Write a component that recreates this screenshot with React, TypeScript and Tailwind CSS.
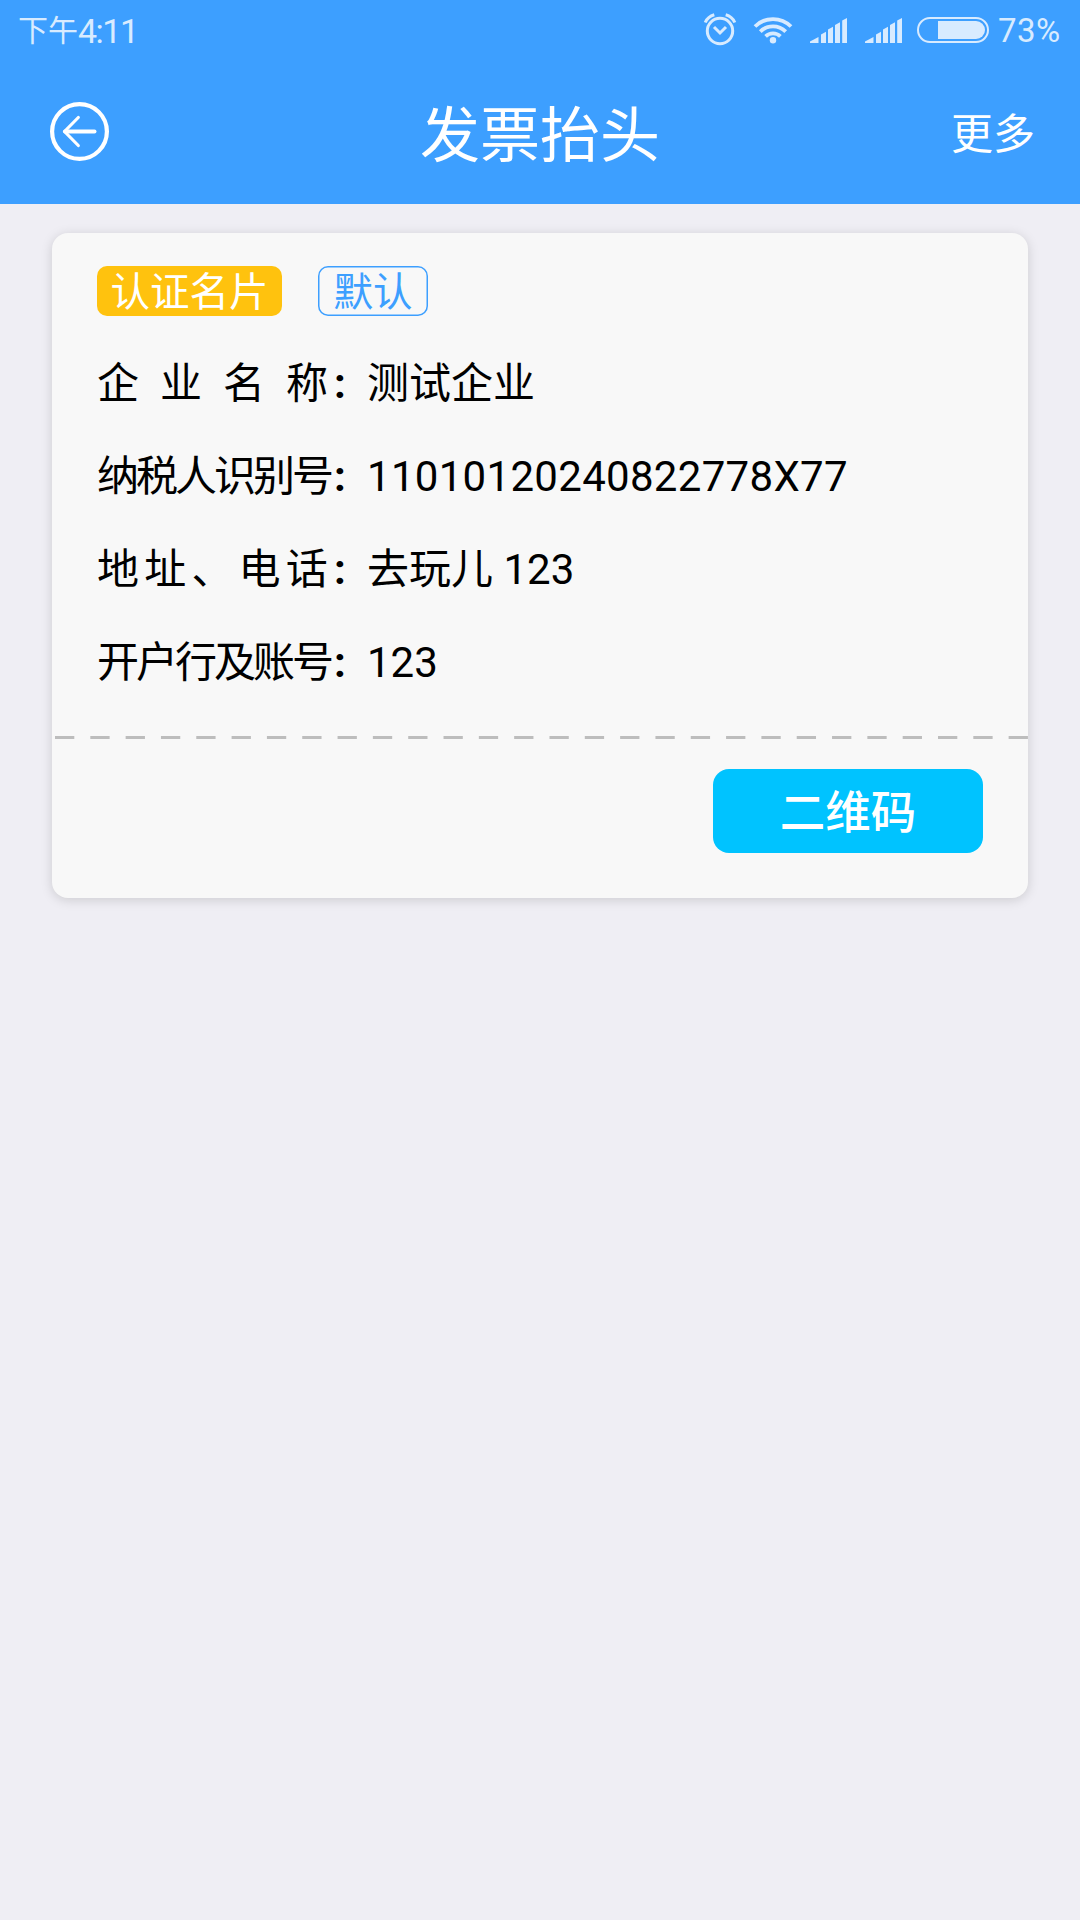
import { useState } from 'react'

type Field = {
  label: string
  tracking: string
  value: string
}

const fields: Field[] = [
  { label: '企业名称', tracking: 'tracking-[21px]', value: '测试企业' },
  { label: '纳税人识别号', tracking: 'tracking-[-3px]', value: '11010120240822778X77' },
  { label: '地址、电话', tracking: 'tracking-[5.2px]', value: '去玩儿 123' },
  { label: '开户行及账号', tracking: 'tracking-[-3px]', value: '123' },
]

function AlarmIcon() {
  return (
    <svg width="34" height="34" viewBox="0 0 34 34" fill="none" stroke="currentColor" strokeWidth="3">
      <circle cx="17" cy="18" r="12.7" />
      <path d="M11 14L17 20L23 14" />
      <path d="M2.2 9.5C4 5.5 7 3 11.3 1.8" />
      <path d="M31.8 9.5C30 5.5 27 3 22.7 1.8" />
    </svg>
  )
}

function WifiIcon() {
  return (
    <svg width="40" height="28" viewBox="0 0 40 28" fill="none" stroke="currentColor" strokeWidth="3.8">
      <path d="M2 10.5A25.5 25.5 0 0 1 38 10.5" />
      <path d="M7.3 15.6A18 18 0 0 1 32.7 15.6" />
      <path d="M12.6 20.4A10.6 10.6 0 0 1 27.4 20.4" />
      <circle cx="20" cy="24.2" r="3.2" fill="currentColor" stroke="none" />
    </svg>
  )
}

function SignalIcon() {
  return (
    <svg width="37" height="25" viewBox="0 0 37 25" fill="currentColor">
      <path d="M0 25V23.4L8.5 19V25Z" />
      <path d="M11 25V16.5L16 13.8V25Z" />
      <path d="M18 25V11.5L23 8.8V25Z" />
      <path d="M25 25V7L30 4.2V25Z" />
      <path d="M32.2 25V2.6L37 0V25Z" />
    </svg>
  )
}

function BatteryIcon() {
  return (
    <svg width="72" height="26" viewBox="0 0 72 26" fill="none">
      <rect x="1" y="1" width="70" height="24" rx="12" stroke="currentColor" strokeWidth="2" />
      <path d="M21 4H59A9 9 0 0 1 59 22H21Z" fill="currentColor" />
    </svg>
  )
}

function BackIcon() {
  return (
    <svg width="60" height="60" viewBox="0 0 60 60" fill="none" stroke="currentColor" strokeLinecap="round">
      <circle cx="29.5" cy="29.5" r="27.4" strokeWidth="4.2" />
      <path d="M15 29.5H44.5" strokeWidth="4" />
      <path d="M28.3 15.5L14.5 29.5L28.3 43.5" strokeWidth="3.2" strokeLinejoin="round" />
    </svg>
  )
}

function StatusBar() {
  return (
    <div className="flex h-[60px] items-center justify-between pr-[18px] pl-[18px] text-[#d8ebff]">
      <div className="flex items-center text-[30px] leading-[60px]">
        <span className="pt-[2px]">下午</span>
        <span className="pt-px text-[34px] tracking-[-1.5px]">4:11</span>
      </div>
      <div className="flex items-center">
        <AlarmIcon />
        <span className="ml-[16px]"><WifiIcon /></span>
        <span className="ml-[17px]"><SignalIcon /></span>
        <span className="ml-[18px]"><SignalIcon /></span>
        <span className="ml-[15px]"><BatteryIcon /></span>
        <span className="ml-[9px] w-[64px] pt-px text-[33px] leading-[60px] tracking-[0.4px]">73%</span>
      </div>
    </div>
  )
}

export default function App() {
  const [showCode, setShowCode] = useState(false)

  return (
    <div className="flex h-[1920px] w-[1080px] flex-col bg-[#efeef4] font-[Roboto,'Noto_Sans_CJK_SC',sans-serif]">
      <header className="h-[204px] bg-[#3d9fff] text-white">
        <StatusBar />
        <div className="grid h-[144px] grid-cols-3 items-center pr-[45px] pl-[50px]">
          <button type="button" aria-label="返回" className="justify-self-start">
            <BackIcon />
          </button>
          <h1 className="pt-[9px] pr-[5px] text-center text-[60px] leading-[135px] font-normal">发票抬头</h1>
          <button type="button" className="justify-self-end pt-[5px] text-[42px]">更多</button>
        </div>
      </header>

      <main className="px-[52px] pt-[29px]">
        <section className="h-[665px] overflow-hidden rounded-[16px] bg-[#f8f8f8] shadow-[0_2px_12px_rgba(0,0,0,0.15)]">
          <div className="flex gap-9 pt-[33px] pl-[45px] text-[39.5px]">
            <span className="h-[50px] w-[185px] rounded-[10px] bg-[#ffc20e] text-center leading-[54px] text-white">认证名片</span>
            <span className="h-[50px] w-[110px] rounded-[10px] text-center leading-[54px] text-[#3d9fff] shadow-[inset_0_0_0_1.5px_#3d9fff]">
              默认
            </span>
          </div>

          <dl className="pt-[21px] pl-[45px] text-[42px] leading-[93px] text-black">
            {fields.map((field) => (
              <div key={field.label} className="flex h-[93px] whitespace-nowrap">
                <dt className="flex w-[270px]">
                  <span className="w-[237px]">
                    <span className={field.tracking}>{field.label.slice(0, -1)}</span>
                    {field.label.slice(-1)}
                  </span>
                  <span className="font-bold">:</span>
                </dt>
                <dd className={field.value.length > 10 ? 'tracking-[0.3px]' : ''}>{field.value}</dd>
              </div>
            ))}
          </dl>

          <svg className="mt-[27px] block" width="976" height="3" viewBox="0 0 976 3">
            <line x1="3" y1="1.5" x2="976" y2="1.5" stroke="#bdbdbd" strokeWidth="3" strokeDasharray="19.3 16.02" />
          </svg>

          <div className="flex justify-end pt-[30px] pr-[45px]">
            <button
              type="button"
              onClick={() => setShowCode(!showCode)}
              className="h-[84px] w-[270px] rounded-[16px] bg-[#00c3ff] pt-[6px] text-[45.5px] font-medium text-white"
            >
              二维码
            </button>
          </div>
        </section>
      </main>
    </div>
  )
}
